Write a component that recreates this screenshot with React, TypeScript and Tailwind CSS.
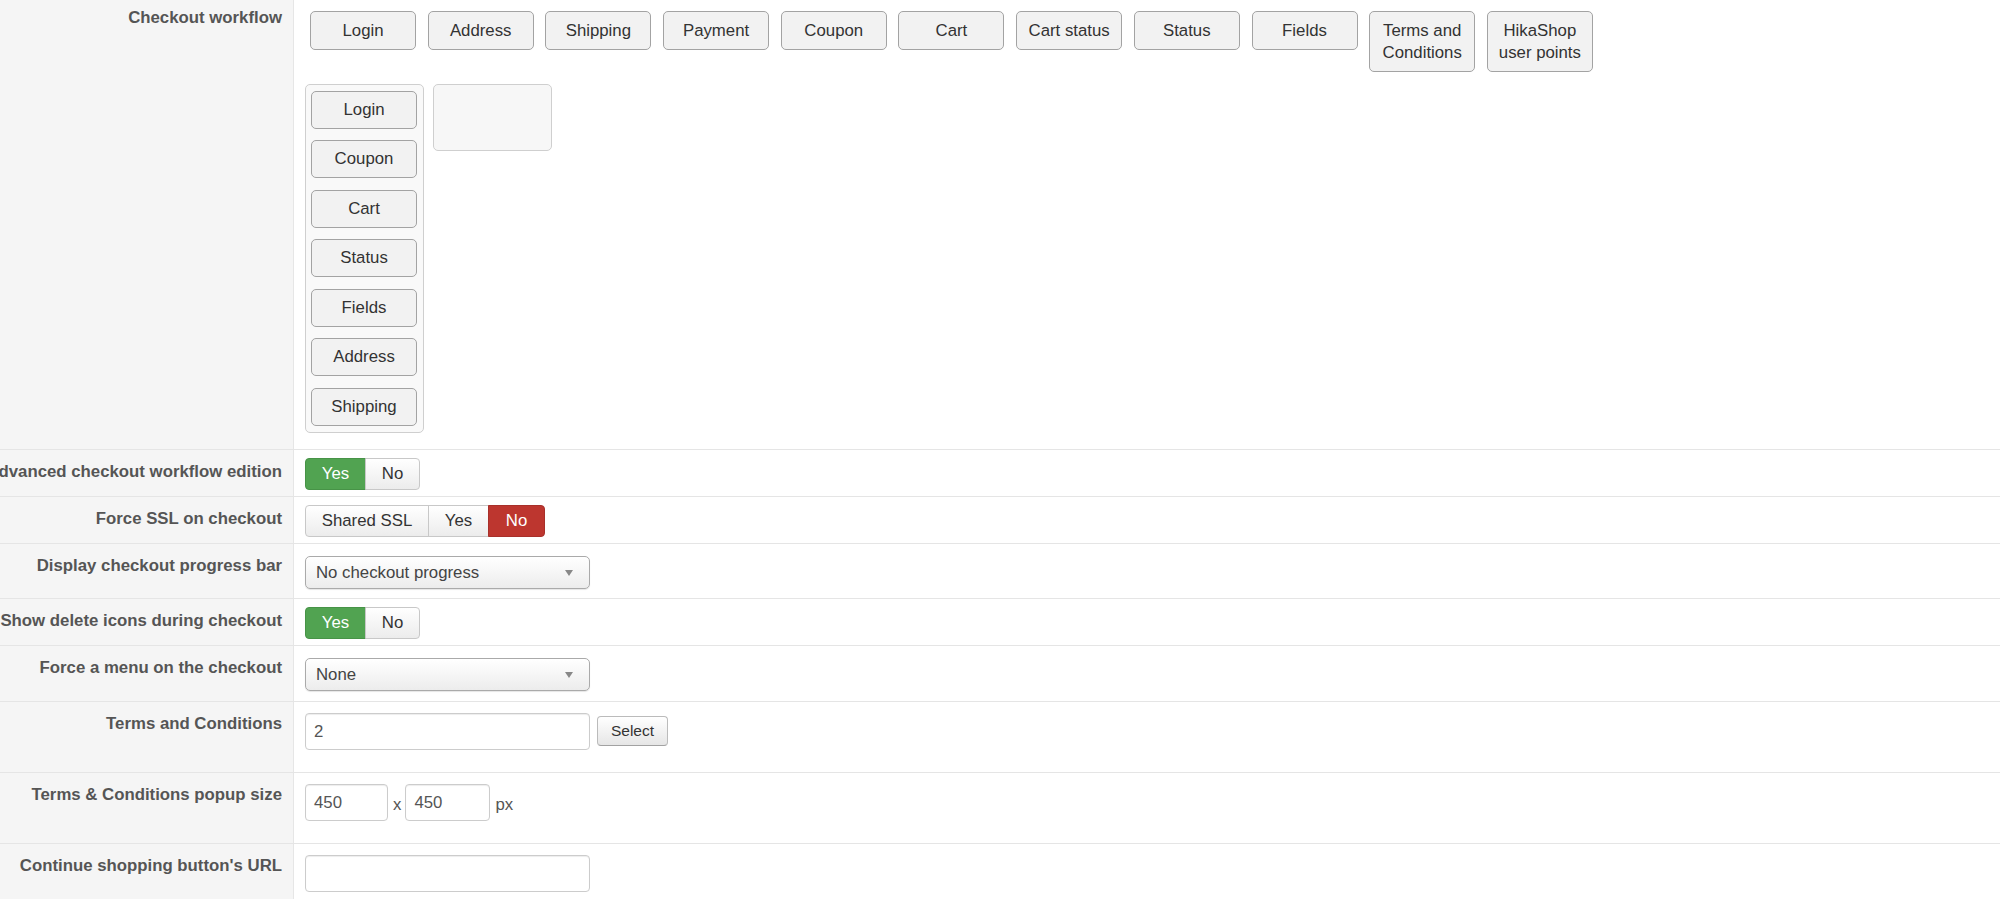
import type { ReactNode } from "react";

const topSteps: ReactNode[] = [
  "Login",
  "Address",
  "Shipping",
  "Payment",
  "Coupon",
  "Cart",
  "Cart status",
  "Status",
  "Fields",
  <>Terms and<br />Conditions</>,
  <>HikaShop<br />user points</>,
];

const workflow = ["Login", "Coupon", "Cart", "Status", "Fields", "Address", "Shipping"];

function StepButton({ children, py = "py-[7px]" }: { children: ReactNode; py?: string }) {
  return (
    <div className={`w-[106px] shrink-0 rounded-[5px] border border-[#a3a3a3] bg-[#f2f2f2] text-center leading-[22px] text-[#333] ${py}`}>
      {children}
    </div>
  );
}

function Row({
  label,
  h,
  labelPt = "pt-[11px]",
  contentPt,
  children,
}: {
  label: string;
  h: string;
  labelPt?: string;
  contentPt: string;
  children: ReactNode;
}) {
  return (
    <div className={`flex border-b border-[#e5e5e5] ${h}`}>
      <div
        className={`flex w-[294px] shrink-0 justify-end whitespace-nowrap border-r border-[#e6e6e6] bg-[#f5f5f5] pr-[11px] text-[16.8px] font-bold leading-[22px] text-[#555] ${labelPt}`}
      >
        <span>{label}</span>
      </div>
      <div className={`flex-1 pl-[11px] ${contentPt}`}>{children}</div>
    </div>
  );
}

function Toggle({ options }: { options: { text: string; w: string; on?: string }[] }) {
  return (
    <div className="flex">
      {options.map((o, i) => (
        <div
          key={o.text}
          className={`flex h-[32px] items-center justify-center border ${o.w} ${
            i === 0 ? "rounded-l-[4px]" : "-ml-px"
          } ${i === options.length - 1 ? "rounded-r-[4px]" : ""} ${
            o.on === "green"
              ? "border-[#479347] bg-[#51a351] text-white"
              : o.on === "red"
                ? "border-[#a8302a] bg-[#bd362f] text-white"
                : "border-[#c8c8c8] bg-linear-to-b from-white to-[#ececec] text-[#333]"
          }`}
        >
          {o.text}
        </div>
      ))}
    </div>
  );
}

function Select({ value }: { value: string }) {
  return (
    <div className="flex h-[33px] w-[285px] items-center justify-between rounded-[5px] border border-[#aaa] bg-linear-to-b from-white via-[#f6f6f6] to-[#ececec] pl-[10px] pr-[16px] text-[#444] shadow-[0_1px_1px_rgba(0,0,0,0.1)]">
      <span>{value}</span>
      <span className="h-0 w-0 border-x-[4px] border-t-[6px] border-x-transparent border-t-[#888]" />
    </div>
  );
}

function Input({ value, w }: { value: string; w: string }) {
  return (
    <div
      className={`flex h-[37px] items-center rounded-[4px] border border-[#ccc] bg-white pl-[8px] text-[#555] shadow-[inset_0_1px_1px_rgba(0,0,0,0.075)] ${w}`}
    >
      {value}
    </div>
  );
}

export default function App() {
  return (
    <div className="h-[899px] w-[2000px] overflow-hidden bg-white font-['Liberation_Sans',Arial,sans-serif] text-[16.8px]">
      <Row label="Checkout workflow" h="h-[450px]" labelPt="pt-[7px]" contentPt="pt-[11px]">
        <div className="ml-[5px] flex items-start gap-[11.7px]">
          {topSteps.map((s, i) => (
            <StepButton key={i} py="py-[7.5px]">
              {s}
            </StepButton>
          ))}
        </div>
        <div className="mt-[11.5px] flex items-start gap-[9px]">
          <div className="flex w-[119px] flex-col gap-[11.6px] rounded-[5px] border border-[#cfcfcf] bg-[#f9f9f9] px-[5px] py-[6px]">
            {workflow.map((s) => (
              <StepButton key={s}>{s}</StepButton>
            ))}
          </div>
          <div className="h-[67px] w-[119px] rounded-[5px] border border-[#cfcfcf] bg-[#f7f7f7]" />
        </div>
      </Row>

      <Row label="Advanced checkout workflow edition" h="h-[47px]" contentPt="pt-[8px]">
        <Toggle
          options={[
            { text: "Yes", w: "w-[61px]", on: "green" },
            { text: "No", w: "w-[55px]" },
          ]}
        />
      </Row>

      <Row label="Force SSL on checkout" h="h-[47px]" contentPt="pt-[8px]">
        <Toggle
          options={[
            { text: "Shared SSL", w: "w-[124px]" },
            { text: "Yes", w: "w-[61px]" },
            { text: "No", w: "w-[57px]", on: "red" },
          ]}
        />
      </Row>

      <Row label="Display checkout progress bar" h="h-[55px]" contentPt="pt-[12px]">
        <Select value="No checkout progress" />
      </Row>

      <Row label="Show delete icons during checkout" h="h-[47px]" contentPt="pt-[8px]">
        <Toggle
          options={[
            { text: "Yes", w: "w-[61px]", on: "green" },
            { text: "No", w: "w-[55px]" },
          ]}
        />
      </Row>

      <Row label="Force a menu on the checkout" h="h-[56px]" contentPt="pt-[12px]">
        <Select value="None" />
      </Row>

      <Row label="Terms and Conditions" h="h-[71px]" contentPt="pt-[11px]">
        <div className="flex items-start">
          <Input value="2" w="w-[285px]" />
          <div className="ml-[7px] mt-[3px] flex h-[30px] w-[71px] items-center justify-center rounded-[4px] border border-[#bbb] border-b-[#a2a2a2] bg-linear-to-b from-white to-[#e6e6e6] text-[15.5px] text-[#333]">
            Select
          </div>
        </div>
      </Row>

      <Row label="Terms & Conditions popup size" h="h-[71px]" contentPt="pt-[11px]">
        <div className="flex items-start text-[#555]">
          <Input value="450" w="w-[83px]" />
          <span className="ml-[5px] mt-[10px] leading-[22px]">x</span>
          <Input value="450" w="w-[85px] ml-[4px]" />
          <span className="ml-[5px] mt-[10px] leading-[22px]">px</span>
        </div>
      </Row>

      <Row label="Continue shopping button's URL" h="h-[60px]" contentPt="pt-[11px]">
        <Input value="" w="w-[285px]" />
      </Row>
    </div>
  );
}
